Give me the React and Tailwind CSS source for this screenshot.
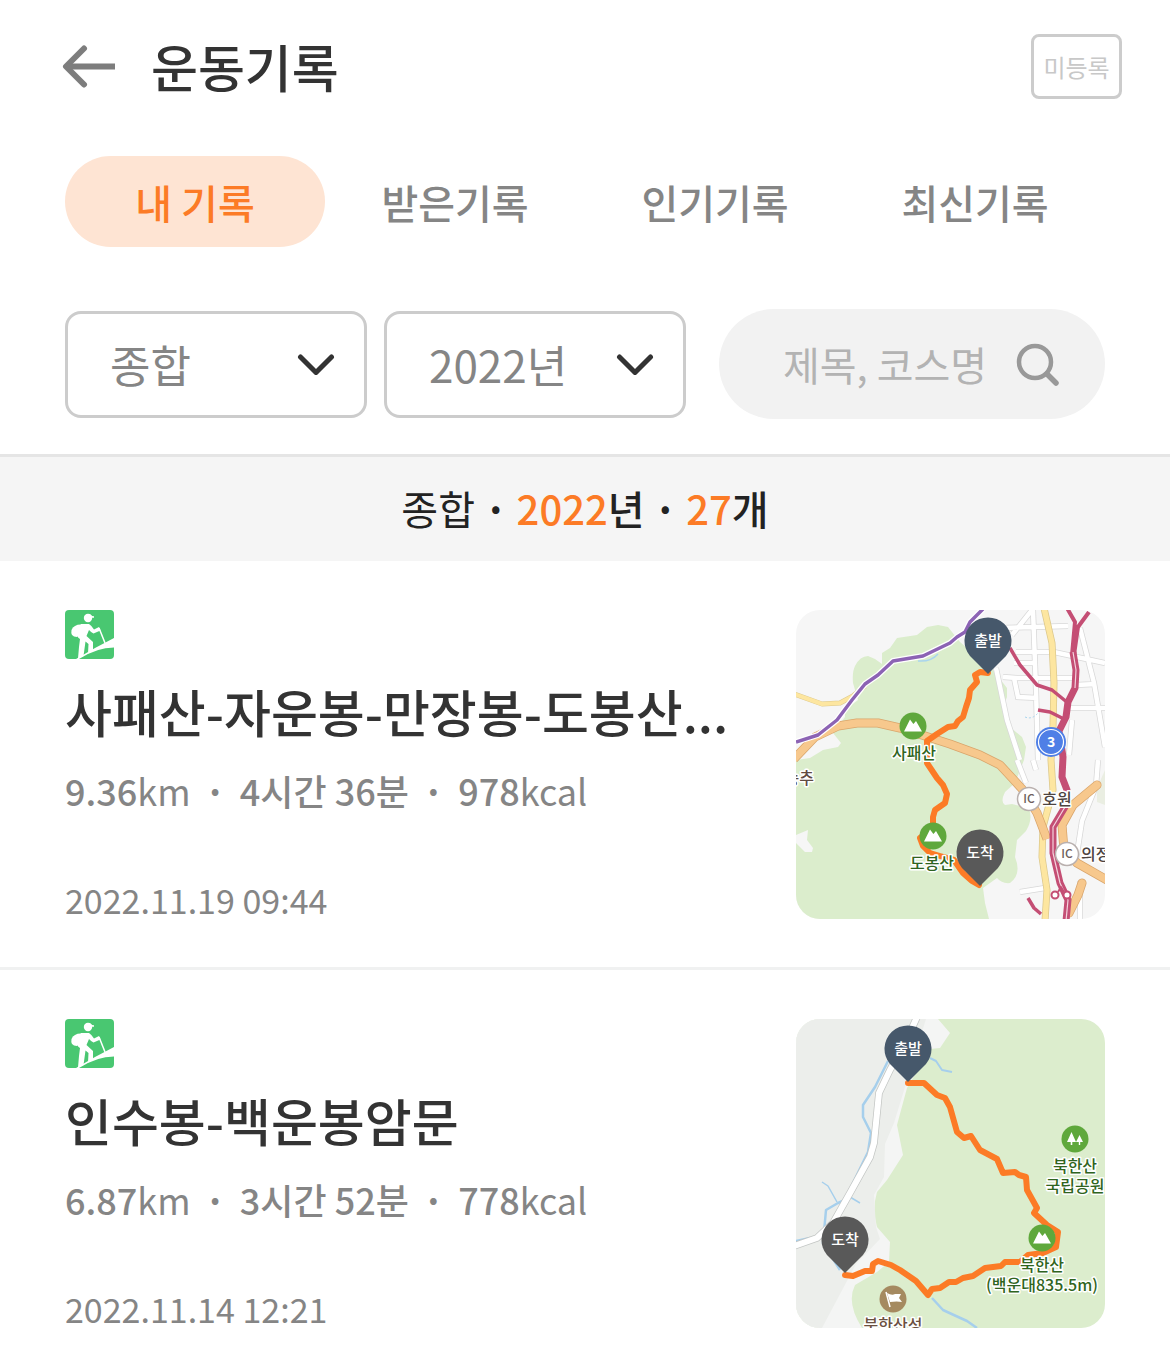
import React, { useState } from 'react';

const TABS = ['내 기록', '받은기록', '인기기록', '최신기록'];

const RECORDS = [
  { id: 1, title: '사패산-자운봉-만장봉-도봉산...', km: '9.36', time: '4시간 36분', kcal: '978', date: '2022.11.19 09:44' },
  { id: 2, title: '인수봉-백운봉암문', km: '6.87', time: '3시간 52분', kcal: '778', date: '2022.11.14 12:21' },
];

const ROUTE = { fill: 'none', stroke: '#fc7b26', strokeWidth: 6, strokeLinejoin: 'round', strokeLinecap: 'round' };

/* ── map parts ─────────────────────────────────────── */
const Pin = ({ x, y, color, label }) => (
  <g transform={`translate(${x} ${y})`}>
    <path d="M0 33 L-18 15 A23.5 23.5 0 1 1 18 15 Z" fill={color} />
    <text y="5" textAnchor="middle" fontSize="15" fontWeight="500" fill="#fff">{label}</text>
  </g>
);

const Peak = ({ x, y }) => (
  <g transform={`translate(${x} ${y})`}>
    <circle r="13.5" fill="#5fa83c" />
    <path d="M-9 5.5 L-3 -6.5 L0 -2.5 L0.5 -2 L3 -5 L9 5.5 Z" fill="#fff" />
  </g>
);

const Label = ({ x, y, color = '#2f6420', anchor = 'middle', children }) => (
  <text x={x} y={y} textAnchor={anchor} fontSize="16" fontWeight="500" fill={color}
    stroke="#fff" strokeWidth="3" strokeLinejoin="round" paintOrder="stroke">
    {children}
  </text>
);

const Interchange = ({ x, y }) => (
  <g transform={`translate(${x} ${y})`}>
    <circle r="11.5" fill="#fff" stroke="#b9b0ae" strokeWidth="1.5" />
    <text y="4" textAnchor="middle" fontSize="12" fontWeight="500" fill="#6d605c">IC</text>
  </g>
);

const DobongMap = () => (
  <svg viewBox="0 0 309 309" className="block w-full" role="img" aria-label="도봉산 코스 지도">
    <rect width="309" height="309" fill="#f6f6f6" />
    <path d="M0 150 L14 148 L27 140 L42 137 L45 133 L37 123 L49 107 L49 100 L62 90 L57 73 Q56 62 59 56 Q64 46 72 46 L79 49 L86 54 L86 43 L94 38 L101 28 L121 25 L131 17 L142 15 L152 17 L164 32 L197 60 L211 78 L211 87 L207 97 L214 117 L226 127 L230 137 L228 150 L219 173 L209 182 Q204 192 209 195 L216 194 L232 198 Q238 207 230 221 L221 230 L219 247 Q226 264 214 273 Q206 274 201 268 L187 278 L189 293 L193 309 L0 309 Z" fill="#dbedcc" />
    <path d="M0 225 L12 220 L11 230 L17 238 L16 242 L9 242 L0 233 Z" fill="#f6f6f6" />
    <path d="M122 51 Q135 52 142 44" fill="none" stroke="#a9d5ee" strokeWidth="1.5" />
    <path d="M301 178 L309 160 V195 L301 192 Z" fill="#eaeee2" />

    {/* local streets */}
    <g fill="none" stroke="#d8d8d8" strokeWidth="6">
      <path d="M200 58 L211 110 L224 150" />
      <path d="M205 18 L238 17 L272 16 M220 42 L258 42 L309 53 M207 67 L221 68 L279 68 M218 53 H240 M237 0 L240 80 L242 150 M218 68 L222 87 L242 88 M271 98 H309 M284 18 L298 73 L309 137 M236 0 L216 25 M221 150 L230 173 M280 75 L300 74 M276 110 L273 145" />
      <path d="M302 150 L300 176 L286 211 L280 250 M224 282 L249 278 M284 271 V309 M240 160 L237 150" />
    </g>
    <g fill="none" stroke="#fff" strokeWidth="4.5">
      <path d="M200 58 L211 110 L224 150" />
      <path d="M205 18 L238 17 L272 16 M220 42 L258 42 L309 53 M207 67 L221 68 L279 68 M218 53 H240 M237 0 L240 80 L242 150 M218 68 L222 87 L242 88 M271 98 H309 M284 18 L298 73 L309 137 M236 0 L216 25 M221 150 L230 173 M280 75 L300 74 M276 110 L273 145" />
      <path d="M302 150 L300 176 L286 211 L280 250 M224 282 L249 278 M284 271 V309 M240 160 L237 150" />
    </g>
    <path d="M229 107 Q236 110 242 103" fill="none" stroke="#a9d5ee" strokeDasharray="2 2" />

    {/* arterial roads */}
    <g fill="none" strokeLinejoin="round">
      <g stroke="#dcc88c" strokeWidth="7">
        <path d="M-2 84 L26 94 L44 93 L57 86 L69 76" strokeWidth="5" />
        <path d="M248 -2 L256 33 L258 73 L257 117 L255 150 L257 180 L247 217 L246 247 L251 280 L249 311" />
      </g>
      <g stroke="#fde6a0" strokeWidth="5.5">
        <path d="M-2 84 L26 94 L44 93 L57 86 L69 76" strokeWidth="4" />
        <path d="M248 -2 L256 33 L258 73 L257 117 L255 150 L257 180 L247 217 L246 247 L251 280 L249 311" />
      </g>
      <g stroke="#d9a56b" strokeWidth="9">
        <path d="M-2 149 L19 127 L42 116 L61 113 L82 113 L104 118 L154 134 L184 145 L204 155 L217 169 L227 180 L241 203 L251 229" />
        <path d="M301 175 L277 195 L266 215 L268 240 L281 253 L311 270 M286 273 L282 285 L273 303" strokeLinecap="round" />
      </g>
      <g stroke="#f7c88d" strokeWidth="7.5">
        <path d="M-2 149 L19 127 L42 116 L61 113 L82 113 L104 118 L154 134 L184 145 L204 155 L217 169 L227 180 L241 203 L251 229" />
        <path d="M301 175 L277 195 L266 215 L268 240 L281 253 L311 270 M286 273 L282 285 L273 303" strokeLinecap="round" />
      </g>
    </g>

    {/* rail lines */}
    <g fill="none" strokeLinejoin="round">
      <path d="M0 132 L22 125 L41 110 L56 90 L69 74 L82 65 L97 51 L127 46 L154 33 L161 27 L169 22 L174 12 L187 -1" stroke="#fff" strokeWidth="6" />
      <path d="M0 132 L22 125 L41 110 L56 90 L69 74 L82 65 L97 51 L127 46 L154 33 L161 27 L169 22 L174 12 L187 -1" stroke="#8c63b4" strokeWidth="3.5" />
      <path d="M214 38 L224 55 L241 75 L256 80 L272 93 M242 100 L254 102 L268 109 M232 288 L238 298 L245 304" stroke="#c44e74" strokeWidth="3.5" />
      <path d="M293 2 L282 17 L278 45 M271 -2 L279 12 L276 45" stroke="#c44e74" strokeWidth="4" />
      <path d="M277 42 L280 60 L279 78 L272 92 L270 107 L263 121 L267 147 L266 167 L271 180 L269 197 L257 217 L257 243 L264 273 L272 290 L270 311" stroke="#c44e74" strokeWidth="7" />
      <path d="M277 42 L280 60 L279 78 M269 197 L257 217 L257 243 L264 273 L272 290 L270 311" stroke="#f3d3de" strokeWidth="1.2" />
      <g stroke="#c44e74" strokeWidth="2" fill="#fff">
        <circle cx="259" cy="285" r="3.5" />
        <circle cx="271" cy="285" r="3.5" />
        <path d="M262 282 L265 277 L268 282" fill="none" />
      </g>
    </g>

    <path d="M192 63 L184 62 L179 65 L181 72 L174 80 L173 88 L170 97 L167 107 L162 111 L159 116 L152 117 L141 124 L131 131 L131 153 L141 168 L147 175 L151 184 L149 193 L139 200 L137 207 L137 218 L124 228 L127 236 L134 243 L144 246 L158 250 L167 263 L176 271 L183 275" {...ROUTE} />
    <Peak x={117} y={116} />
    <Peak x={137} y={226} />
    <Label x={118} y={149}>사패산</Label>
    <Label x={136} y={259}>도봉산</Label>
    <Label x={18} y={174} anchor="end" color="#5f4a42">송추</Label>

    <g transform="translate(255 132)">
      <circle r="15" fill="#4f7fe6" />
      <circle r="12.5" fill="none" stroke="#fff" strokeWidth="1.2" />
      <text y="5" textAnchor="middle" fontSize="14" fontWeight="700" fill="#fff">3</text>
    </g>
    <Interchange x={233} y={189} />
    <Interchange x={271} y={244} />
    <Label x={261} y={195} color="#4d4340">호원</Label>
    <Label x={285} y={250} anchor="start" color="#4d4340">의정부</Label>

    <Pin x={192} y={31} color="#46586b" label="출발" />
    <Pin x={184} y={243} color="#595959" label="도착" />
  </svg>
);

const BukhanMap = () => (
  <svg viewBox="0 0 309 309" className="block w-full" role="img" aria-label="북한산 코스 지도">
    <rect width="309" height="309" fill="#dcedcd" />
    <path d="M0 0 H142 L154 14 L144 29 L134 30 L111 69 L101 106 L107 136 L91 161 L81 173 Q76 190 81 208 L94 223 L93 243 L81 253 L59 266 Q50 284 66 309 H0 Z" fill="#f4f5f4" />
    <path d="M0 0 H130 L109 68 L98 104 L89 125 L88 158 L78 176 L80 208 L84 220 L60 245 L26 309 H0 Z" fill="#eceeeb" />

    {/* streams */}
    <g fill="none" stroke="#a6cfec" strokeWidth="2.5" strokeLinejoin="round">
      <path d="M92 42 L79 68 L67 86 L67 98 L75 114 L72 133 L57 164 L49 181 L42 184 L30 191 L27 224 L44 251" />
      <path d="M26 163 L32 167 L41 183 M54 178 L64 184" strokeWidth="1.5" />
      <path d="M134 39 L140 42 L146 51 L156 53" strokeWidth="2" />
      <path d="M136 279 L147 291 L160 297 L171 302 L181 309" />
      <path d="M0 222 L14 219" />
    </g>

    <path d="M121 -2 L112 18 L94 51 L83 74 L78 124 L74 138 L54 174 L37 204 L21 219 L-2 227" fill="none" stroke="#c3c6c4" strokeWidth="7.5" />
    <path d="M121 -2 L112 18 L94 51 L83 74 L78 124 L74 138 L54 174 L37 204 L21 219 L-2 227" fill="none" stroke="#fff" strokeWidth="6" />

    <path d="M112 64 H128 L141 76 L149 79 L154 88 L161 113 L168 119 L175 117 L184 131 L201 140 L207 154 L219 153 L223 156 L230 158 L231 171 L241 189 L238 194 L251 206 L262 213 L260 228 L247 234 L232 236 L224 243 L209 243 L205 247 L189 249 L177 257 L167 259 L160 263 L153 263 L144 269 L136 270 L132 276 L120 262 L104 251 L95 246 L82 242 L77 245 L76 252 L69 252 L57 257 L49 256" {...ROUTE} />

    <g transform="translate(279 120)">
      <circle r="13.5" fill="#5fa83c" />
      <path d="M-3.5 -7 L1 3 H-2.7 V6 H-4.3 V3 H-8 Z M4.5 -4 L8 3 H5.2 V6 H3.8 V3 H1 Z" fill="#fff" />
    </g>
    <Label x={279} y={153}>북한산</Label>
    <Label x={279} y={173}>국립공원</Label>

    <Peak x={246} y={219} />
    <Label x={246} y={252}>북한산</Label>
    <Label x={246} y={272}>(백운대835.5m)</Label>

    <g transform="translate(97 280)">
      <circle r="13.5" fill="#a58a60" />
      <path d="M-7 -7 L-3 8" stroke="#fff" strokeWidth="1.5" />
      <path d="M-6 -6 Q-1 -3 2 -5 L8 -5 L6 -1 L9 3 Q4 2 -3 3 Z" fill="#fff" />
    </g>
    <Label x={97} y={312} color="#6b5040">북한산성</Label>

    <Pin x={112} y={30} color="#46586b" label="출발" />
    <Pin x={49} y={221} color="#595959" label="도착" />
  </svg>
);

/* ── icons ─────────────────────────────────────────── */
const HikerIcon = () => (
  <svg viewBox="0 0 49 49" className="block size-[49px]" role="img" aria-label="등산">
    <rect width="49" height="49" rx="4" fill="#49c771" />
    <circle cx="23" cy="8" r="4.2" fill="#fff" />
    <path d="M22 4 Q26 3.6 27 6 L29 6.3 V7.8 H24 Z" fill="#fff" />
    <path d="M17 14.5 Q9 14 6.5 20 Q5 27 12 27 L15 24 Z" fill="#fff" />
    <path d="M16 14 H24 Q27 16 29 19.5 L34 17 L35.5 20.5 L28.5 23.5 Q26 22 24 20 L21.5 26 L28 32 V41 L23 43.5 L23.5 34 L20.5 31.5 L18.5 46 L13 48.5 L14 37 L15 29 Q11 27 12 21 Z" fill="#fff" />
    <path d="M34 18 L40 33" stroke="#fff" strokeWidth="1.5" />
    <path d="M11 49 L30 38 L49 28 V37.5 Q32 37.5 14 49 Z" fill="#fff" />
  </svg>
);

const Chevron = () => (
  <svg viewBox="0 0 38 22" className="pointer-events-none absolute top-1/2 right-8 h-[22px] w-[38px] -translate-y-1/2" aria-hidden="true">
    <path d="M3.5 4 L19 19.5 L34.5 4" fill="none" stroke="#333" strokeWidth="5" strokeLinecap="round" strokeLinejoin="round" />
  </svg>
);

const FilterSelect = ({ label, value, onChange, options }) => (
  <div className="relative">
    <select
      aria-label={label}
      value={value}
      onChange={e => onChange(e.target.value)}
      className="h-[107px] w-full appearance-none rounded-2xl border-3 border-[#ccc] bg-white pl-[42px] text-[44px] leading-[60px] text-[#858585]"
    >
      {options.map(o => <option key={o}>{o}</option>)}
    </select>
    <Chevron />
  </div>
);

const Dot = () => <span className="px-3.5 font-bold">·</span>;

const RecordCard = ({ record, children }) => (
  <li className="flex items-start justify-between gap-8 border-b-3 border-[#f0f1f1] px-[65px] pt-[49px] pb-[43px]">
    <div className="min-w-0 flex-1">
      <HikerIcon />
      <h2 className="mt-[22px] whitespace-nowrap text-[51px] leading-[60px] font-medium text-[#333]">{record.title}</h2>
      <p className="mt-[25px] whitespace-nowrap text-[36px] leading-[48px] text-[#858585]">
        <b className="font-medium">{record.km}</b>km
        <Dot />
        <b className="font-medium">{record.time}</b>
        <Dot />
        <b className="font-medium">{record.kcal}</b>kcal
      </p>
      <time className="mt-[62px] block text-[34px] leading-[48px] text-[#858585]">{record.date}</time>
    </div>
    <div className="w-[309px] flex-none overflow-hidden rounded-3xl">{children}</div>
  </li>
);

export default function App() {
  const [tab, setTab] = useState(TABS[0]);
  const [kind, setKind] = useState('종합');
  const [year, setYear] = useState('2022년');

  return (
    <main className="min-h-screen bg-white font-['Noto_Sans_CJK_KR',sans-serif]">
      <header className="flex items-center pt-[34px] pr-12 pl-[62px]">
        <button aria-label="뒤로" className="flex-none">
          <svg viewBox="0 0 54 44" className="h-[44px] w-[54px]" aria-hidden="true">
            <path d="M22 3.5 L4 21.5 L22 39.5" fill="none" stroke="#7d7d7d" strokeWidth="6" strokeLinejoin="round" strokeLinecap="round" />
            <path d="M4 21.5 H53" stroke="#7d7d7d" strokeWidth="6" />
          </svg>
        </button>
        <h1 className="ml-[35px] flex-1 pb-0.5 text-[51px] leading-[60px] font-medium text-[#333]">운동기록</h1>
        <button className="h-[65px] w-[91px] rounded-lg border-3 border-[#ccc] text-[24px] leading-[36px] text-[#c8c8c8]">미등록</button>
      </header>

      <nav className="mt-[57px] grid grid-cols-4 px-[65px]">
        {TABS.map(t => (
          <button
            key={t}
            onClick={() => setTab(t)}
            className={`h-[91px] rounded-full text-[40px] leading-[60px] font-medium ${t === tab ? 'bg-[#fee4d3] text-[#fc7b26]' : 'text-[#858585]'}`}
          >
            {t}
          </button>
        ))}
      </nav>

      <div className="mt-[62px] grid grid-cols-[minmax(0,302fr)_minmax(0,302fr)_minmax(0,402fr)] items-center gap-x-[17px] px-[65px]">
        <FilterSelect label="종목" value={kind} onChange={setKind} options={['종합', '등산', '걷기']} />
        <FilterSelect label="연도" value={year} onChange={setYear} options={['2022년', '2021년']} />
        <form className="ml-4 flex h-[110px] items-center rounded-full bg-[#f2f2f2] pr-[45px] pl-16" onSubmit={e => e.preventDefault()}>
          <input
            type="text"
            aria-label="제목, 코스명 검색"
            placeholder="제목, 코스명"
            className="min-w-0 flex-1 bg-transparent text-[40px] leading-[60px] text-[#333] outline-none placeholder:text-[#b3b3b3]"
          />
          <button aria-label="검색" className="flex-none">
            <svg viewBox="0 0 44 44" className="size-[44px]" aria-hidden="true">
              <circle cx="19" cy="20" r="16" fill="none" stroke="#999" strokeWidth="4.5" />
              <path d="M31 32 L40 41" stroke="#999" strokeWidth="5.5" strokeLinecap="round" />
            </svg>
          </button>
        </form>
      </div>

      <p className="mt-[35px] border-t-3 border-[#e5e5e5] bg-[#f5f5f5] pt-[21px] pb-[23px] text-center text-[40px] leading-[60px] text-[#222]">
        종합 <b className="font-bold">·</b> <b className="font-medium"><span className="text-[#fc7b26]">2022</span>년</b>{' '}
        <b className="font-bold">·</b> <b className="font-medium"><span className="text-[#fc7b26]">27</span>개</b>
      </p>

      <ul>
        <RecordCard record={RECORDS[0]}><DobongMap /></RecordCard>
        <RecordCard record={RECORDS[1]}><BukhanMap /></RecordCard>
      </ul>
    </main>
  );
}
